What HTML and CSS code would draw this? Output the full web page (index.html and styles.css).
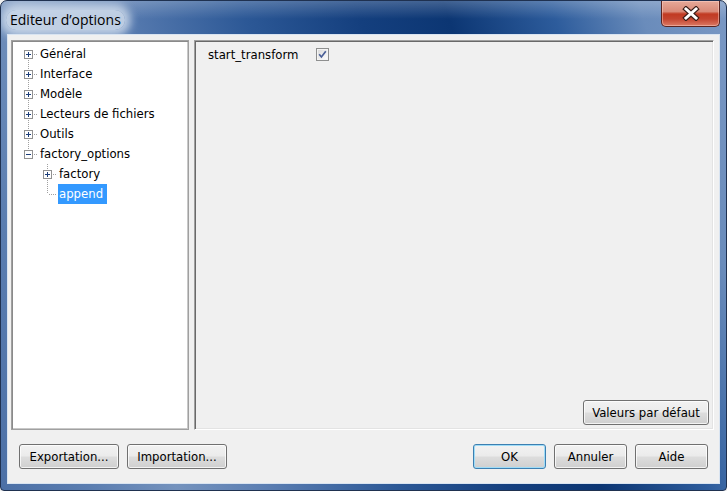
FILE: index.html
```html
<!DOCTYPE html>
<html lang="fr">
<head>
<meta charset="utf-8">
<title>Editeur d’options</title>
<link rel="stylesheet" href="styles.css">
</head>
<body>
<div class="window">
  <div class="titlebar">
    <span class="title">Editeur d’options</span>
    <button class="close" aria-label="Fermer">
      <svg width="18" height="15" viewBox="0 0 18 15"><path d="M4 3 L14 12 M14 3 L4 12" stroke="#3b1d18" stroke-width="5.2" stroke-linecap="square"/><path d="M4 3 L14 12 M14 3 L4 12" stroke="#fff" stroke-width="3" stroke-linecap="square"/></svg>
    </button>
  </div>
  <div class="client">
    <div class="main">
      <div class="tree">
        <div class="row first"><span class="branch"><svg width="9" height="9" viewBox="0 0 9 9"><rect x=".5" y=".5" width="8" height="8" fill="#fff" stroke="#919191"/><path d="M2 4.5h5M4.5 2v5" stroke="#1c3e7a"/></svg></span><span class="label">Général</span></div>
        <div class="row"><span class="branch"><svg width="9" height="9" viewBox="0 0 9 9"><rect x=".5" y=".5" width="8" height="8" fill="#fff" stroke="#919191"/><path d="M2 4.5h5M4.5 2v5" stroke="#1c3e7a"/></svg></span><span class="label">Interface</span></div>
        <div class="row"><span class="branch"><svg width="9" height="9" viewBox="0 0 9 9"><rect x=".5" y=".5" width="8" height="8" fill="#fff" stroke="#919191"/><path d="M2 4.5h5M4.5 2v5" stroke="#1c3e7a"/></svg></span><span class="label">Modèle</span></div>
        <div class="row"><span class="branch"><svg width="9" height="9" viewBox="0 0 9 9"><rect x=".5" y=".5" width="8" height="8" fill="#fff" stroke="#919191"/><path d="M2 4.5h5M4.5 2v5" stroke="#1c3e7a"/></svg></span><span class="label">Lecteurs de fichiers</span></div>
        <div class="row"><span class="branch"><svg width="9" height="9" viewBox="0 0 9 9"><rect x=".5" y=".5" width="8" height="8" fill="#fff" stroke="#919191"/><path d="M2 4.5h5M4.5 2v5" stroke="#1c3e7a"/></svg></span><span class="label">Outils</span></div>
        <div class="row last"><span class="branch"><svg width="9" height="9" viewBox="0 0 9 9"><rect x=".5" y=".5" width="8" height="8" fill="#fff" stroke="#919191"/><path d="M2 4.5h5" stroke="#1c3e7a"/></svg></span><span class="label">factory_options</span></div>
        <div class="row l1"><span class="branch"><svg width="9" height="9" viewBox="0 0 9 9"><rect x=".5" y=".5" width="8" height="8" fill="#fff" stroke="#919191"/><path d="M2 4.5h5M4.5 2v5" stroke="#1c3e7a"/></svg></span><span class="label">factory</span></div>
        <div class="row l1 last leaf"><span class="branch"></span><span class="label selected">append</span></div>
      </div>
      <div class="options">
        <div class="opt-row">
          <span class="opt-label">start_transform</span>
          <span class="check"><svg width="13" height="13" viewBox="0 0 13 13"><defs><linearGradient id="cg" x1="0" y1="0" x2="1" y2="1"><stop offset="0" stop-color="#dcdcdc"/><stop offset="1" stop-color="#fbfbfb"/></linearGradient></defs><rect x=".5" y=".5" width="12" height="12" fill="#f4f4f4" stroke="#8e8f8f"/><rect x="2" y="2" width="9" height="9" fill="url(#cg)"/><path d="M3.2 6.3 L5.4 9 L9.8 3.2" fill="none" stroke="#4a5f97" stroke-width="1.7"/></svg></span>
        </div>
        <button class="btn defaults">Valeurs par défaut</button>
      </div>
    </div>
    <div class="bottom">
      <button class="btn wide">Exportation...</button>
      <button class="btn wide">Importation...</button>
      <span class="spacer"></span>
      <button class="btn std ok">OK</button>
      <button class="btn std">Annuler</button>
      <button class="btn std">Aide</button>
    </div>
  </div>
</div>
</body>
</html>
```

FILE: styles.css
```css
html, body {
  margin: 0;
  padding: 0;
  background: #f0f0f0;
}

.window {
  width: 727px;
  height: 491px;
  box-sizing: border-box;
  border: 1px solid #1f3150;
  border-radius: 7px 7px 4px 4px;
  display: flex;
  flex-direction: column;
  background:
    linear-gradient(to bottom, rgba(255,255,255,0.22) 0, rgba(255,255,255,0) 18px),
    linear-gradient(72deg, #4c70a6 0%, #5a7db0 10%, #7492bd 20%, #5b7eb2 30%, #2c5896 45%, #143f7e 58%, #0c3673 68%, #2d5c9c 80%, #6a8cbb 90%, #7a98c4 100%);
  overflow: hidden;
  font-family: "DejaVu Sans Condensed", "DejaVu Sans", sans-serif;
  font-size: 13px;
  color: #000;
}

.titlebar {
  height: 33px;
  flex: none;
  display: flex;
  justify-content: space-between;
  align-items: flex-start;
  padding: 0 6px 0 8px;
}

.title {
  font-family: "Open Sans", "Noto Sans", sans-serif;
  font-size: 14px;
  line-height: 20px;
  margin-top: 9px;
  padding: 0 4px;
  margin-left: -3px;
  border-radius: 10px;
  background: rgba(214, 225, 239, 0.8);
  box-shadow: 0 0 8px 6px rgba(214, 225, 239, 0.8);
}

.close {
  width: 59px;
  height: 26px;
  padding: 0;
  margin: 0;
  border: 1px solid #5a2420;
  border-top: none;
  border-radius: 0 0 5px 5px;
  background: linear-gradient(to bottom, #e6a999 0%, #d98a78 42%, #c13a22 52%, #c44530 72%, #dc7a64 100%);
  box-shadow: inset 0 0 0 1px rgba(255, 220, 210, 0.45);
  display: flex;
  align-items: center;
  justify-content: center;
}

.close svg { display: block; }

.client {
  flex: 1;
  margin: 0 6px 6px 6px;
  border: 1px solid #d9e4f1;
  background: #f0f0f0;
  padding: 5px 5px 0 3px;
  display: flex;
  flex-direction: column;
}

.main {
  height: 390px;
  display: flex;
  gap: 5px;
}

/* tree */
.tree {
  width: 178px;
  flex: none;
  box-sizing: border-box;
  background: #fff;
  border: 1px solid #a0a0a0;
  box-shadow: inset 1px 1px 0 #8a8a8a, inset -1px -1px 0 #c8c8c8;
  padding: 3px 0 0 7px;
}

.row {
  display: flex;
  height: 20px;
  align-items: flex-start;
}

.row.l1 { padding-left: 19px; }

.branch {
  position: relative;
  width: 19px;
  height: 20px;
  flex: none;
  display: flex;
  justify-content: center;
}

.branch svg {
  position: relative;
  z-index: 1;
  display: block;
  margin-top: 6px;
}

.branch::before {
  content: "";
  position: absolute;
  left: 9px;
  width: 1px;
  top: 0;
  bottom: 0;
  background: repeating-linear-gradient(to bottom, #a0a0a0 0 1px, transparent 1px 2px);
}

.row.first .branch::before { top: 10px; }
.row.last .branch::before { bottom: 10px; }

.branch::after {
  content: "";
  position: absolute;
  left: 10px;
  width: 9px;
  top: 10px;
  height: 1px;
  background: repeating-linear-gradient(to right, transparent 0 1px, #a0a0a0 1px 2px);
}

.label {
  margin-left: 1px;
  padding: 0 4px 0 1px;
  line-height: 20px;
  height: 20px;
  white-space: nowrap;
}

.label.selected {
  background: #3399ff;
  color: #fff;
}

/* options panel */
.options {
  flex: 1;
  box-sizing: border-box;
  border: 1px solid;
  border-color: #a0a0a0 #ffffff #ffffff #a0a0a0;
  box-shadow: inset 1px 1px 0 #696969, inset -1px -1px 0 #e3e3e3;
  display: flex;
  flex-direction: column;
  padding: 3px 4px 4px 13px;
}

.opt-row {
  height: 20px;
  display: flex;
  align-items: center;
}

.opt-label {
  width: 108px;
  white-space: nowrap;
}

.check svg { display: block; }

/* buttons */
.btn {
  font-family: inherit;
  font-size: 13px;
  color: #000;
  height: 25px;
  box-sizing: border-box;
  padding: 0;
  margin: 0;
  border: 1px solid #707070;
  border-radius: 3px;
  background: linear-gradient(to bottom, #f2f2f2 0%, #ebebeb 48%, #dddddd 52%, #cfcfcf 100%);
  box-shadow: inset 0 0 0 1px rgba(255,255,255,0.75);
}

.btn.ok {
  border-color: #3c7fb1;
  box-shadow: inset 0 0 0 1px #9fdcf7;
}

.defaults {
  margin-top: auto;
  align-self: flex-end;
  width: 126px;
}

.bottom {
  margin-top: 14px;
  height: 25px;
  display: flex;
  gap: 8px;
  padding: 0 6px 0 8px;
}

.spacer { flex: 1; }

.wide { width: 100px; }
.std { width: 73px; }
```
